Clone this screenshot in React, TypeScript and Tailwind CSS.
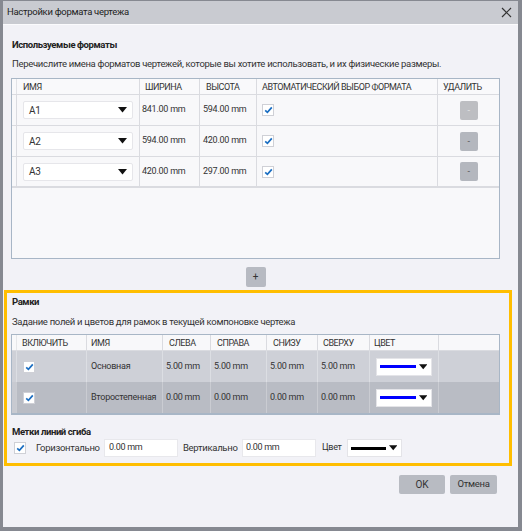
import React from "react";

const F = { fontFamily: 'Roboto, "Noto Sans", sans-serif' };

function Check() {
  return (
    <div className="w-[12px] h-[12px] bg-white border border-[#cfd0d6] flex items-center justify-center">
      <svg width="9" height="8" viewBox="0 0 9 8">
        <path d="M1.2 4.4 L3.4 6.4 L7.8 1.4" fill="none" stroke="#1b6ec2" strokeWidth="1.7" />
      </svg>
    </div>
  );
}

function Tri() {
  return (
    <svg width="9" height="6" viewBox="0 0 9 6">
      <path d="M0 0 H9 L4.5 5.5 Z" fill="#111" />
    </svg>
  );
}

function NameSelect({ v }: { v: string }) {
  return (
    <div className="ml-[6px] w-[110px] h-[18px] bg-white border border-[#e6e6ea] rounded-[2px] flex items-center justify-between pl-[5px] pr-[5px] text-[10px] text-[#333]">
      <span>{v}</span>
      <Tri />
    </div>
  );
}

function ColorSelect({ color, w, line }: { color: string; w: string; line: string }) {
  return (
    <div className={`${w} h-[18px] bg-white border border-[#e4e4e8] flex items-center pl-[3px] pr-[4px] gap-[3px]`}>
      <div className={`${line} h-[3px]`} style={{ background: color }} />
      <Tri />
    </div>
  );
}

const rows1 = [
  { n: "A1", w: "841.00 mm", h: "594.00 mm", dis: true },
  { n: "A2", w: "594.00 mm", h: "420.00 mm", dis: false },
  { n: "A3", w: "420.00 mm", h: "297.00 mm", dis: false },
];

export default function App() {
  return (
    <div
      className="w-[522px] h-[531px] box-border border-t border-l-[3px] border-r-[4px] border-b-[4px] border-[#868991] bg-[#f2f2f7] flex flex-col text-[#333]"
      style={F}
    >
      {/* Title bar */}
      <div className="h-[23px] bg-[#c9cbd1] flex items-center justify-between pl-[4px] pr-[6px] shrink-0">
        <span className="text-[9.5px] tracking-[-0.3px] text-[#222]">Настройки формата чертежа</span>
        <svg width="11" height="11" viewBox="0 0 11 11">
          <path d="M1 1 L10 10 M10 1 L1 10" stroke="#333" strokeWidth="1.2" />
        </svg>
      </div>

      <div className="flex-1 flex flex-col border-t border-[#fbfbfd]">
        {/* Section 1 */}
        <div className="pl-[9px] pt-[12px] text-[9.5px] tracking-[-0.4px] font-bold leading-[16px] text-[#222]">Используемые форматы</div>
        <div className="pl-[9px] mt-[3px] text-[9.5px] tracking-[-0.3px] leading-[16px] text-[#333] whitespace-nowrap">
          Перечислите имена форматов чертежей, которые вы хотите использовать, и их физические размеры.
        </div>

        <div className="ml-[8px] mt-[6px] w-[489px] h-[181px] border border-[#a8b6c6] bg-[#f8f8fa] flex flex-col">
          {/* header */}
          <div className="flex h-[16px] border-b border-[#dadbe0] text-[9px] tracking-[-0.45px] leading-[16px] text-[#333] bg-[#f9f9fb] whitespace-nowrap">
            <div className="w-[5px] border-r border-[#e2e3e7]" />
            <div className="w-[123px] border-r border-[#dadbe0] pl-[6px]">ИМЯ</div>
            <div className="w-[60px] border-r border-[#dadbe0] pl-[5px]">ШИРИНА</div>
            <div className="w-[57px] border-r border-[#dadbe0] pl-[6px]">ВЫСОТА</div>
            <div className="w-[181px] border-r border-[#dadbe0] pl-[5px]">АВТОМАТИЧЕСКИЙ ВЫБОР ФОРМАТА</div>
            <div className="w-[61px] pl-[5px]">УДАЛИТЬ</div>
          </div>
          {rows1.map((r, i) => (
            <div key={r.n} className={`flex h-[31px] border-b ${i === 2 ? "border-b-2" : ""} border-[#dadbe0] text-[9px] tracking-[-0.25px] text-[#333] whitespace-nowrap`}>
              <div className="w-[5px] border-r border-[#dadbe0]" />
              <div className="w-[123px] border-r border-[#dadbe0] flex items-center">
                <NameSelect v={r.n} />
              </div>
              <div className="w-[60px] border-r border-[#dadbe0] flex items-center pl-[2px]">{r.w}</div>
              <div className="w-[57px] border-r border-[#dadbe0] flex items-center pl-[3px]">{r.h}</div>
              <div className="w-[181px] border-r border-[#dadbe0] flex items-center pl-[5px]">
                <Check />
              </div>
              <div className="w-[61px] flex items-center justify-center">
                <div
                  className={`w-[18px] h-[19px] rounded-[2px] flex items-center justify-center text-[9px] leading-none ${
                    r.dis ? "bg-[#bdbec2] text-[#e6e6e6]" : "bg-[#b4b7be] text-[#555]"
                  }`}
                >
                  -
                </div>
              </div>
            </div>
          ))}
        </div>

        <div className="mt-[8px] flex justify-center pr-[10px]">
          <div className="w-[20px] h-[20px] rounded-[2px] bg-[#b7bac2] flex items-center justify-center text-[10px] text-[#333] leading-none">
            +
          </div>
        </div>

        {/* Orange box */}
        <div className="ml-[1px] mt-[3px] w-[508px] h-[176px] border-[3px] border-[#ffbe00] flex flex-col">
          <div className="pl-[5px] pt-[1px] text-[9.5px] tracking-[-0.4px] font-bold leading-[16px] text-[#222]">Рамки</div>
          <div className="pl-[5px] mt-[4px] text-[9.5px] tracking-[-0.3px] leading-[16px] text-[#333] whitespace-nowrap">
            Задание полей и цветов для рамок в текущей компоновке чертежа
          </div>
          <div className="ml-[4px] mt-[4px] w-[489px] h-[81px] border border-[#a8b6c6] border-b-2 flex flex-col bg-[#f8f8fa]">
            <div className="flex h-[16px] border-b border-[#dadbe0] text-[9px] tracking-[-0.45px] leading-[16px] text-[#333] whitespace-nowrap">
              <div className="w-[5px] border-r border-[#e6e7ea]" />
              <div className="w-[70px] border-r border-[#dadbe0] pl-[5px]">ВКЛЮЧИТЬ</div>
              <div className="w-[76px] border-r border-[#dadbe0] pl-[4px]">ИМЯ</div>
              <div className="w-[48px] border-r border-[#dadbe0] pl-[6px]">СЛЕВА</div>
              <div className="w-[56px] border-r border-[#dadbe0] pl-[6px]">СПРАВА</div>
              <div className="w-[51px] border-r border-[#dadbe0] pl-[6px]">СНИЗУ</div>
              <div className="w-[52px] border-r border-[#dadbe0] pl-[5px]">СВЕРХУ</div>
              <div className="w-[69px] border-r border-[#dadbe0] pl-[4px]">ЦВЕТ</div>
              <div className="w-[60px]" />
            </div>
            {[
              { n: "Основная", v: "5.00 mm", bg: "bg-[#ced0d7]", side: "bg-[#ced0d7]", line: "border-[#dcdee3]" },
              { n: "Второстепенная", v: "0.00 mm", bg: "bg-[#b9bcc4]", side: "bg-[#c8cad1]", line: "border-[#caccd2]" },
            ].map((r) => (
              <div key={r.n} className={`flex h-[31px] ${r.bg} text-[9px] tracking-[-0.25px] text-[#333] whitespace-nowrap`}>
                <div className={`w-[5px] border-r ${r.line} ${r.side}`} />
                <div className={`w-[70px] border-r ${r.line} flex items-center pl-[6px]`}>
                  <Check />
                </div>
                <div className={`w-[76px] border-r ${r.line} flex items-center pl-[4px]`}>{r.n}</div>
                <div className={`w-[48px] border-r ${r.line} flex items-center pl-[3px]`}>{r.v}</div>
                <div className={`w-[56px] border-r ${r.line} flex items-center pl-[3px]`}>{r.v}</div>
                <div className={`w-[51px] border-r ${r.line} flex items-center pl-[3px]`}>{r.v}</div>
                <div className={`w-[52px] border-r ${r.line} flex items-center pl-[3px]`}>{r.v}</div>
                <div className={`w-[69px] border-r ${r.line} flex items-center pl-[6px]`}>
                  <ColorSelect color="#0000ff" w="w-[56px]" line="w-[38px]" />
                </div>
                <div className="w-[60px]" />
              </div>
            ))}
          </div>
          <div className="pl-[5px] mt-[10px] text-[9.5px] tracking-[-0.4px] font-bold leading-[14px] text-[#222]">Метки линий сгиба</div>
          <div className="flex items-center h-[18px] text-[9.5px] tracking-[-0.3px] text-[#333] whitespace-nowrap">
            <div className="ml-[7px]">
              <Check />
            </div>
            <span className="ml-[10px] w-[68px]">Горизонтально</span>
            <div className="w-[74px] h-[18px] bg-white border border-[#e8e8ec] flex items-center pl-[4px] text-[9px]">0.00 mm</div>
            <span className="ml-[5px] w-[59px]">Вертикально</span>
            <div className="w-[74px] h-[18px] bg-white border border-[#e8e8ec] flex items-center pl-[3px] text-[9px]">0.00 mm</div>
            <span className="ml-[6px] w-[25px] text-[9px]">Цвет</span>
            <div>
              <ColorSelect color="#000000" w="w-[55px]" line="w-[37px]" />
            </div>
          </div>
        </div>

        <div className="mt-[9px] flex justify-end gap-[5px] pr-[21px]">
          <div className="w-[46px] h-[19px] bg-[#b8bbc2] rounded-[2px] flex items-center justify-center text-[10px] text-[#333]">OK</div>
          <div className="w-[47px] h-[19px] bg-[#b8bbc2] rounded-[2px] flex items-center justify-center text-[9.5px] tracking-[-0.3px] text-[#333]">Отмена</div>
        </div>
      </div>
    </div>
  );
}
